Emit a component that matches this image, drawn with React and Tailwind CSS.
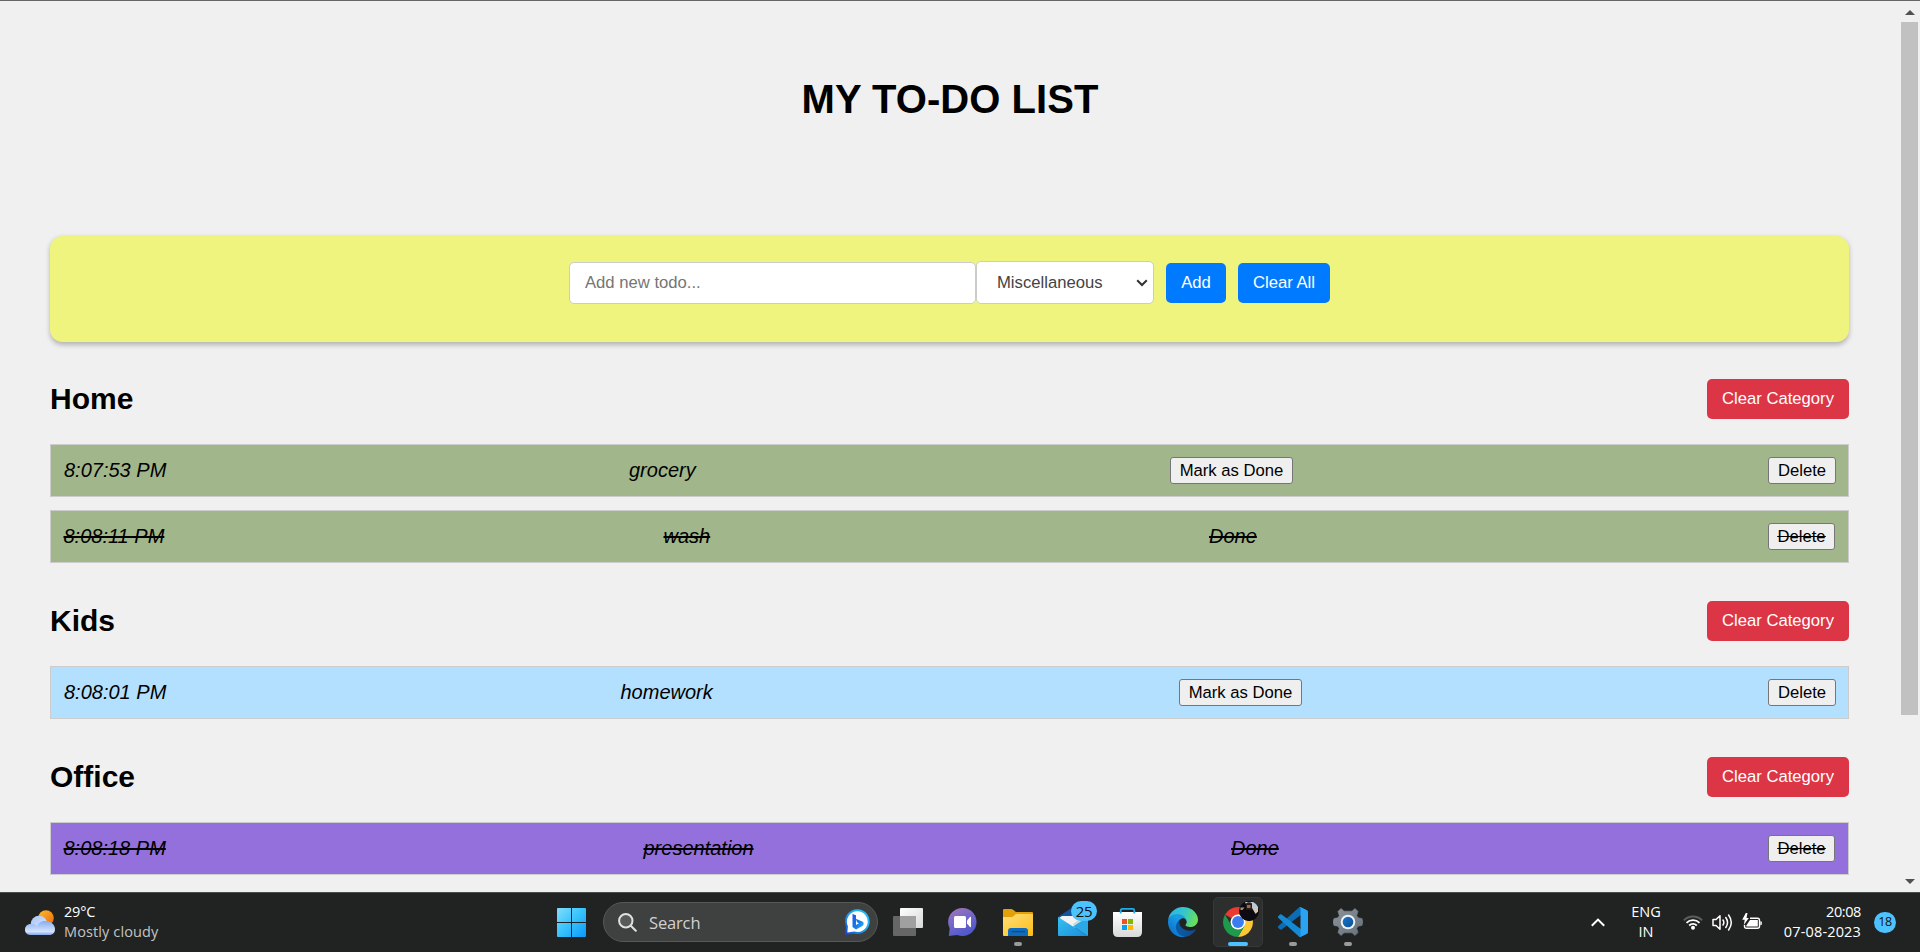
import React from "react";

const categories = [
  {
    name: "Home",
    color: "bg-[#a1b78b]",
    items: [
      { time: "8:07:53 PM", title: "grocery", done: false, timeCol: "w-[565px]", titleCol: "w-[541px]" },
      { time: "8:08:11 PM", title: "wash", done: true, timeCol: "w-[600px]", titleCol: "w-[545.5px]" },
    ],
  },
  {
    name: "Kids",
    color: "bg-[#b3e0ff]",
    items: [{ time: "8:08:01 PM", title: "homework", done: false, timeCol: "w-[556.5px]", titleCol: "w-[558.5px]" }],
  },
  {
    name: "Office",
    color: "bg-[#9370db]",
    items: [{ time: "8:08:18 PM", title: "presentation", done: true, timeCol: "w-[580px]", titleCol: "w-[587.5px]" }],
  },
];

function SmallButton({ children, done, width }) {
  return (
    <button
      className={`h-[27px] shrink-0 rounded-[3px] border border-[#767676] bg-[#efefef] text-center text-[16.67px] leading-[24px] not-italic text-black ${width} ${done ? "line-through" : ""}`}
    >
      {children}
    </button>
  );
}

function TodoRow({ item, color }) {
  return (
    <li
      className={`flex h-[53px] items-center border border-[#ccc] text-[20px] italic text-black ${color} ${item.done ? "pr-[13px] pl-[12.5px] line-through" : "pr-[12px] pl-[13px]"}`}
    >
      <span className={`shrink-0 pb-[2px] ${item.timeCol}`}>{item.time}</span>
      <span className={`shrink-0 pb-[2px] ${item.titleCol}`}>{item.title}</span>
      {item.done ? <span className="pb-[2px]">Done</span> : <SmallButton width="w-[123px]">Mark as Done</SmallButton>}
      <span className="ml-auto flex">
        <SmallButton done={item.done} width={item.done ? "w-[67px]" : "w-[68px]"}>
          Delete
        </SmallButton>
      </span>
    </li>
  );
}

function Category({ category }) {
  return (
    <section className="flex flex-col">
      <div className="flex h-[40px] items-center justify-between">
        <h2 className="pb-px text-[30px] leading-[33px] font-bold">{category.name}</h2>
        <button className="h-[40px] w-[142px] rounded-[5px] bg-[#dc3545] pb-[2px] text-[16.67px] text-white">Clear Category</button>
      </div>
      <ul className="mt-[25px] flex flex-col gap-[13px]">
        {category.items.map((item) => (
          <TodoRow key={item.time} item={item} color={category.color} />
        ))}
      </ul>
    </section>
  );
}

function AddForm() {
  return (
    <div className="flex h-[106px] justify-center rounded-[12.5px] bg-[#eff47e] pt-[25px] shadow-[0_2.5px_5px_rgba(0,0,0,0.25)]">
      <input
        placeholder="Add new todo..."
        className="mt-px h-[42px] w-[407px] rounded-[5px] border border-[#ccc] bg-white px-[15px] text-[16.67px] placeholder:text-[#757575]"
      />
      <div className="relative h-[43px] w-[178px]">
        <select className="h-[43px] w-[178px] appearance-none rounded-[5px] border border-[#ccc] bg-white pl-[20px] text-[16.67px] text-[#444]">
          <option>Miscellaneous</option>
        </select>
        <svg className="absolute top-[18px] right-[6px]" width="12" height="8" viewBox="0 0 12 8" fill="none" stroke="#333" strokeWidth="2">
          <path d="M1.200 1.200 6 6l4.800-4.800" />
        </svg>
      </div>
      <button className="mt-[2px] ml-[12px] h-[40px] w-[60px] rounded-[5px] bg-[#007bff] pb-[2px] text-[16.67px] text-white">Add</button>
      <button className="mt-[2px] ml-[12px] h-[40px] w-[92px] rounded-[5px] bg-[#007bff] pb-[2px] text-[16.67px] text-white">Clear All</button>
    </div>
  );
}

function Scrollbar() {
  return (
    <div className="flex w-[21px] shrink-0 flex-col items-center">
      <svg className="mt-[9px]" width="10" height="5" viewBox="0 0 10 5">
        <path d="M0 5 5 0l5 5z" fill="#505050" />
      </svg>
      <div className="mt-[7px] h-[693px] w-[17px] bg-[#c1c1c1]" />
      <svg className="mt-auto mb-[8px]" width="10" height="5" viewBox="0 0 10 5">
        <path d="M0 0 5 5l5-5z" fill="#505050" />
      </svg>
    </div>
  );
}

function WeatherIcon() {
  return (
    <svg width="30" height="25" viewBox="0 0 30 25">
      <defs>
        <linearGradient id="sun" x1="0" y1="0" x2="1" y2="1">
          <stop offset="0" stopColor="#fcc02a" />
          <stop offset="1" stopColor="#f0640c" />
        </linearGradient>
        <linearGradient id="cloudBack" x1="0" y1="0" x2="1" y2="1">
          <stop offset="0" stopColor="#a9c6f8" />
          <stop offset="1" stopColor="#dce8fc" />
        </linearGradient>
        <linearGradient id="cloudFront" x1="0" y1="0" x2="0" y2="1">
          <stop offset="0" stopColor="#86acf0" />
          <stop offset="0.75" stopColor="#d5e3fb" />
          <stop offset="1" stopColor="#7fa5ea" />
        </linearGradient>
      </defs>
      <circle cx="21" cy="8" r="7.8" fill="url(#sun)" />
      <circle cx="14" cy="14" r="8.3" fill="url(#cloudBack)" />
      <path d="M5 25a5 5 0 0 1-5-5.500c0-3.500 3-6 6.300-5.500C8.500 13.800 11 15 12 17c1-4 4.500-6.500 9-6 5 .2 8.800 3.500 9 8 0 3.500-2 6-5.500 6z" fill="url(#cloudFront)" />
    </svg>
  );
}

function StartIcon() {
  return (
    <svg className="mt-px" width="29" height="29" viewBox="0 0 29 29">
      <defs>
        <linearGradient id="win" x1="0" y1="0" x2="29" y2="29" gradientUnits="userSpaceOnUse">
          <stop offset="0" stopColor="#83dcfc" />
          <stop offset="0.45" stopColor="#3cc6fb" />
          <stop offset="1" stopColor="#0a98fb" />
        </linearGradient>
      </defs>
      <path d="M1 0h13v14H0V1q0-1 1-1zM15 0h13q1 0 1 1v13H15zM0 15h14v14H1q-1 0-1-1zM15 15h14v13q0 1-1 1H15z" fill="url(#win)" />
    </svg>
  );
}

function BingIcon() {
  return (
    <svg width="25" height="26" viewBox="0 0 25 26">
      <defs>
        <linearGradient id="bingRing" x1="1" y1="0" x2="0" y2="1">
          <stop offset="0" stopColor="#2cc0f5" />
          <stop offset="0.5" stopColor="#18a6f0" />
          <stop offset="1" stopColor="#1b48d0" />
        </linearGradient>
        <linearGradient id="bingB" x1="0" y1="0" x2="1" y2="1">
          <stop offset="0" stopColor="#1a55e3" />
          <stop offset="0.6" stopColor="#1780ea" />
          <stop offset="1" stopColor="#33c8ee" />
        </linearGradient>
      </defs>
      <path d="M12.500 1.200a11.400 11.400 0 1 1-3.500 22.300L1.200 24.800l.7-7.500A11.400 11.400 0 0 1 12.500 1.200z" fill="#fff" stroke="url(#bingRing)" strokeWidth="2" />
      <path d="M7.500 5 11 6.300V16l3-1.800-2-1-1.200-3.500 7 3c1.200.6 1.200 3 0 4L11 20.500 7.500 18z" fill="url(#bingB)" />
    </svg>
  );
}

function TaskViewIcon() {
  return (
    <svg width="30" height="28" viewBox="0 0 30 28">
      <defs>
        <linearGradient id="tv" x1="0" y1="0" x2="1" y2="1">
          <stop offset="0" stopColor="#fff" />
          <stop offset="1" stopColor="#d8d8d8" />
        </linearGradient>
      </defs>
      <rect x="7" y="0" width="23" height="20" rx="1" fill="url(#tv)" />
      <rect x="0" y="8" width="23" height="20" rx="1" fill="#666" />
      <rect x="7" y="8" width="16" height="12" fill="#a0a0a0" />
    </svg>
  );
}

function ChatIcon() {
  return (
    <svg width="29" height="28" viewBox="0 0 29 28">
      <defs>
        <linearGradient id="chat" x1="0" y1="0" x2="0.500" y2="1">
          <stop offset="0" stopColor="#a477b4" />
          <stop offset="0.5" stopColor="#7768c9" />
          <stop offset="1" stopColor="#5059c9" />
        </linearGradient>
      </defs>
      <path d="M14.500 0a14 14 0 1 1-5.200 27L.8 28l.9-7.500A14 14 0 0 1 14.500 0z" fill="url(#chat)" />
      <rect x="6" y="8" width="12" height="12" rx="1.500" fill="#fff" />
      <path d="M19 12.500 22 9q1-.6 1 .5v9q0 1-1 .5l-3-3.500z" fill="#fff" />
    </svg>
  );
}

function FolderIcon() {
  return (
    <svg className="mt-px" width="30" height="27" viewBox="0 0 30 27">
      <defs>
        <linearGradient id="folder" x1="0" y1="0" x2="1" y2="1">
          <stop offset="0" stopColor="#ffe07a" />
          <stop offset="1" stopColor="#fcbc18" />
        </linearGradient>
      </defs>
      <path d="M0 1q0-1 1-1h7.500l1.600.7L13 3h16q1 0 1 1v8H0z" fill="#e3a008" />
      <path d="M0 8h9.500L13 5h16q1 0 1 1v20q0 1-1 1H1q-1 0-1-1z" fill="url(#folder)" />
      <path d="M5 27v-5q0-3 3-3h14q3 0 3 3v5z" fill="#0f6cbd" />
      <path d="M9 22.700h12.500" stroke="#0b4a8c" strokeWidth="1.300" strokeLinecap="round" />
    </svg>
  );
}

function MailIcon() {
  return (
    <svg className="-mt-px" width="30" height="29" viewBox="0 0 30 29">
      <defs>
        <linearGradient id="mail" x1="0" y1="0" x2="1" y2="1">
          <stop offset="0" stopColor="#35c1f1" />
          <stop offset="1" stopColor="#1a8ddb" />
        </linearGradient>
      </defs>
      <path d="M0 10 15 0l15 10v8H0z" fill="#1256a3" />
      <path d="M4 9h22v6L15 22 1 11z" fill="#f2f2f2" />
      <path d="M15 17 26 9v6l-9 6z" fill="#cfd6dc" />
      <path d="M0 10 30 29H1q-1 0-1-1z" fill="url(#mail)" />
      <path d="M30 10v19L15 19.600z" fill="#2ba9e6" />
    </svg>
  );
}

function StoreIcon() {
  return (
    <svg className="mt-px" width="29" height="29" viewBox="0 1 29 29">
      <defs>
        <linearGradient id="store" x1="0" y1="0" x2="0" y2="1">
          <stop offset="0" stopColor="#fff" />
          <stop offset="1" stopColor="#d9d9d9" />
        </linearGradient>
      </defs>
      <path d="M0 5h29v20q0 5-5 5H5q-5 0-5-5z" fill="url(#store)" />
      <path d="M7.700 6.500V3.400q0-1.500 1.500-1.500h10.600q1.500 0 1.500 1.500v3.100" fill="none" stroke="#25a9e8" strokeWidth="1.800" />
      <path d="M9 12h5v5H9z" fill="#f25022" />
      <path d="M15 12h5v5h-5z" fill="#7fba00" />
      <path d="M9 18h5v5H9z" fill="#00a4ef" />
      <path d="M15 18h5v5h-5z" fill="#ffb900" />
    </svg>
  );
}

function EdgeIcon() {
  return (
    <svg width="30" height="30" viewBox="0 0 256 256">
      <defs>
        <linearGradient id="edgeA" x1="0.250" y1="0.500" x2="0.950" y2="0.500">
          <stop offset="0" stopColor="#0c59a4" />
          <stop offset="1" stopColor="#114a8b" />
        </linearGradient>
        <linearGradient id="edgeB" x1="0.600" y1="0.300" x2="0.100" y2="1">
          <stop offset="0" stopColor="#1b9de2" />
          <stop offset="0.5" stopColor="#0f82d8" />
          <stop offset="1" stopColor="#0b6fc9" />
        </linearGradient>
        <linearGradient id="edgeC" x1="0" y1="0.300" x2="1" y2="0.600">
          <stop offset="0" stopColor="#2ab4ea" />
          <stop offset="0.5" stopColor="#36c7c8" />
          <stop offset="1" stopColor="#6ee052" />
        </linearGradient>
      </defs>
      <path d="M231 190.500c-3.400 1.800-6.900 3.400-10.500 4.700a101.900 101.900 0 0 1-35.900 6.500c-47.300 0-88.500-32.500-88.500-74.300.1-11.400 6.400-21.900 16.400-27.300-42.800 1.800-53.800 46.400-53.800 72.500 0 73.900 68.100 81.400 82.800 81.400 7.900 0 19.800-2.300 27-4.600l1.300-.4a128.300 128.300 0 0 0 66.600-52.800c2.500-4-1.500-7.500-5.400-5.700z" fill="url(#edgeA)" />
      <path d="M105.700 241.400a79.200 79.200 0 0 1-22.700-21.300 80.700 80.700 0 0 1 29.500-120c3.200-1.500 8.500-4.100 15.600-4 10.100.1 19.600 4.900 25.700 13 4 5.400 6.300 11.900 6.400 18.700 0-.2 24.500-79.600-80-79.600-43.900 0-80 41.700-80 78.200-.2 19.300 4 38.500 12.100 56 27.600 58.800 94.800 87.600 156.400 67.100-21.100 6.600-44.100 3.700-63-8.100z" fill="url(#edgeB)" />
      <path d="M152.300 148.900c-.9 1-3.400 2.500-3.400 5.600 0 2.600 1.700 5.200 4.800 7.300 14.300 10 41.400 8.600 41.500 8.600 10.700 0 21.100-2.900 30.300-8.300A61.400 61.400 0 0 0 255.900 109.300c.3-22.400-8-37.300-11.300-43.900C223.500 23.900 177.700 0 128 0A128 128 0 0 0 0 126.200c.5-36.500 36.800-66 80-66 3.500 0 23.500.3 42 10.100 16.300 8.600 24.900 18.900 30.800 29.200 6.200 10.700 7.300 24.100 7.300 29.500 0 5.300-2.700 13.300-7.800 19.900z" fill="url(#edgeC)" />
    </svg>
  );
}

function ChromeIcon() {
  return (
    <svg width="30" height="30" viewBox="0 0 48 48">
      <path d="M24 24 3.220 12A24 24 0 0 1 44.780 12z" fill="#ea3b30" />
      <path d="M24 24 24 12H44.780A24 24 0 0 1 24 48L34.400 30z" fill="#fcc934" />
      <path d="M24 24 13.600 30 3.220 12A24 24 0 0 0 24 48L34.400 30z" fill="#1e9a4c" />
      <circle cx="24" cy="24" r="12" fill="#fff" />
      <circle cx="24" cy="24" r="9.500" fill="#3b7cf0" />
    </svg>
  );
}

function Avatar() {
  return (
    <svg className="absolute top-[8px] right-[6px]" width="20" height="20" viewBox="0 0 20 20">
      <defs>
        <clipPath id="face">
          <circle cx="10" cy="10" r="10" />
        </clipPath>
      </defs>
      <g clipPath="url(#face)">
        <rect width="20" height="20" fill="#0e0c10" />
        <path d="M6 1h11l2 4v5l-3 2-3-5V3H7z" fill="#b9ccd6" />
        <path d="M14.500 6.500H19v4l-2.500 2.500z" fill="#d8c7b2" />
        <path d="M1.500 6.500h4l-2 2.500h-2z" fill="#a98f78" />
        <path d="M7 2.500q3-2.500 6 0V9H7z" fill="#2a1c18" />
        <path d="M8 4h3.500v3H8z" fill="#a06a4c" />
        <path d="M3 20q0-10 6-11.500 7 0 8 11.500z" fill="#0d0b10" />
      </g>
    </svg>
  );
}

function CodeIcon() {
  return (
    <svg width="30" height="30" viewBox="0 0 100 100">
      <path d="M96.500 10.800 75.900.9a6.200 6.200 0 0 0-7.100 1.200L1.300 63.600a4.200 4.200 0 0 0 0 6.200l5.500 5c1.500 1.300 3.700 1.400 5.300.2L93.400 13.400c2.700-2 6.600-.1 6.600 3.300v-.2a6.200 6.200 0 0 0-3.500-5.700z" fill="#0a6db5" />
      <path d="M96.500 89.200 75.900 99.100a6.200 6.200 0 0 1-7.100-1.200L1.300 36.400a4.200 4.200 0 0 1 0-6.200l5.500-5a4.200 4.200 0 0 1 5.300-.2l81.300 61.600c2.700 2 6.600.1 6.600-3.300v.2a6.200 6.200 0 0 1-3.500 5.700z" fill="#1489d4" />
      <path d="M75.900 99.100a6.200 6.200 0 0 1-7.100-1.200c2.300 2.300 6.200.7 6.200-2.600V4.700c0-3.300-3.900-4.900-6.200-2.600A6.200 6.200 0 0 1 75.900.9l20.600 9.900a6.200 6.200 0 0 1 3.500 5.700v67c0 2.400-1.400 4.600-3.500 5.700z" fill="#2aa4f2" />
    </svg>
  );
}

function SettingsIcon() {
  return (
    <svg width="30" height="30" viewBox="0 0 30 30">
      <defs>
        <linearGradient id="gear" x1="0" y1="0" x2="30" y2="30" gradientUnits="userSpaceOnUse">
          <stop offset="0" stopColor="#8d959b" />
          <stop offset="1" stopColor="#65707a" />
        </linearGradient>
        <linearGradient id="gearDot" x1="0" y1="0" x2="1" y2="1">
          <stop offset="0" stopColor="#1a75c8" />
          <stop offset="1" stopColor="#0a4f96" />
        </linearGradient>
      </defs>
      <path
        d="M0 15 1 11.500 5 10.800 6.300 8.500 5 4.500 8 1.500 11 4.200H19L22 1.500 25 4.500 23.700 8.500 25 10.800 29 11.500 30 15 29 18.500 25 19.200 23.700 21.500 25 25.500 22 28.500 19 25.800H11L8 28.500 5 25.500 6.300 21.500 5 19.200 1 18.500z"
        fill="url(#gear)"
        stroke="url(#gear)"
        strokeWidth="0.600"
        strokeLinejoin="round"
      />
      <circle cx="15" cy="15" r="7.300" fill="#eef1f4" />
      <circle cx="15" cy="15" r="5.300" fill="url(#gearDot)" />
    </svg>
  );
}

function TaskbarApp({ children, running }) {
  return (
    <div className="relative flex h-[58px] w-[55px] items-center pl-[13px]">
      {children}
      {running && <span className="absolute bottom-[5px] left-[24px] h-[4px] w-[8px] rounded-full bg-[#9a9a9a]" />}
    </div>
  );
}

function Taskbar() {
  return (
    <footer className="flex h-[60px] shrink-0 items-center border-t border-[#4a4b4b] bg-[#212322] pb-px font-['Open_Sans','Noto_Sans',sans-serif] text-[14.500px] leading-[20px] text-white">
      <div className="flex w-[557px] items-center pl-[25px]">
        <WeatherIcon />
        <div className="ml-[9px] flex flex-col pb-px">
          <span className="tracking-[-0.200px]">29°C</span>
          <span className="tracking-[0.120px] text-[#c4c5c5]">Mostly cloudy</span>
        </div>
      </div>
      <StartIcon />
      <div className="ml-[17px] flex h-[40px] w-[275px] items-center rounded-full border border-[#565757] bg-[#3f4040] pr-[7px] pl-[14px]">
        <svg width="19" height="19" viewBox="0 0 19 19" fill="none" stroke="#e0e0e0" strokeWidth="2" strokeLinecap="round">
          <circle cx="7.800" cy="7.800" r="6.700" fill="#585959" />
          <path d="m12.800 12.800 5 5" />
        </svg>
        <span className="ml-[12px] pt-px text-[16.500px] tracking-[-0.150px] text-[#d2d2d2]">Search</span>
        <span className="ml-auto">
          <BingIcon />
        </span>
      </div>
      <div className="ml-[2px] flex">
        <TaskbarApp><TaskViewIcon /></TaskbarApp>
        <TaskbarApp><ChatIcon /></TaskbarApp>
        <TaskbarApp running><FolderIcon /></TaskbarApp>
        <TaskbarApp>
          <MailIcon />
          <span className="absolute top-[8px] left-[26px] flex h-[20px] w-[26px] items-center justify-center rounded-full bg-[#4cc2ff] text-[15px] tracking-[-0.300px] text-[#111]">25</span>
        </TaskbarApp>
        <TaskbarApp><StoreIcon /></TaskbarApp>
        <TaskbarApp><EdgeIcon /></TaskbarApp>
        <div className="relative flex h-[58px] w-[55px] items-center pl-[3px]">
          <div className="flex h-[50px] w-[50px] items-center justify-center rounded-[5px] border border-[#373838] bg-[#2d2e2e]">
            <ChromeIcon />
          </div>
          <Avatar />
          <span className="absolute bottom-[5px] left-[18px] h-[4px] w-[20px] rounded-full bg-[#4cc2ff]" />
        </div>
        <TaskbarApp running><CodeIcon /></TaskbarApp>
        <TaskbarApp running><SettingsIcon /></TaskbarApp>
      </div>
      <div className="ml-auto flex items-center pr-[24px]">
        <svg width="14" height="9" viewBox="0 0 14 9" fill="none" stroke="#fff" strokeWidth="2">
          <path d="M.8 7.800 7 1.600l6.200 6.200" />
        </svg>
        <div className="ml-[26px] w-[30px] pb-px text-center text-[14.500px]">
          <div>ENG</div>
          <div>IN</div>
        </div>
        <svg className="ml-[22px]" width="20" height="16" viewBox="0 0 20 16" fill="none" strokeWidth="1.800">
          <path d="M.8 6.300a13 13 0 0 1 18.400 0" stroke="#5c5d5d" />
          <path d="M3.500 8.900a9.200 9.200 0 0 1 13 0M6.200 11.500a5.400 5.400 0 0 1 7.600 0" stroke="#fff" />
          <circle cx="10" cy="13.700" r="2" fill="#fff" />
        </svg>
        <svg className="ml-[9px]" width="21" height="19" viewBox="0 0 21 19" fill="none" stroke="#fff" strokeWidth="1.500" strokeLinecap="round" strokeLinejoin="round">
          <path d="M1 6.500h3L8 2.700v13.600L4 12.500H1z" />
          <path d="M11 7q1.700 2.500 0 5M13.800 4.500q3.500 5 0 10M16.600 2q5.400 7.500 0 15" />
        </svg>
        <svg className="mb-[2px] ml-[9px]" width="21" height="17" viewBox="0 0 21 17">
          <path d="M8 5.200h7.500q2 0 2 2v6q0 2-2 2h-11q-2 0-2-2V12" fill="none" stroke="#fff" strokeWidth="1.400" />
          <path d="M8 7h7.800v6.500H4.300V12.500z" fill="#fff" />
          <path d="M18.300 8.200q1.500 0 1.500 1v2q0 1-1.500 1z" fill="#fff" />
          <path d="M3.800 0 .2 6.800h2.500L1.800 12 6.800 5H4.500L5.500 0z" fill="#fff" />
        </svg>
        <div className="ml-[20px] flex w-[78px] flex-col items-end pb-px text-[14.500px]">
          <div className="tracking-[-0.400px]">20:08</div>
          <div className="tracking-[0.150px]">07-08-2023</div>
        </div>
        <span className="ml-[13px] flex h-[21px] w-[22px] items-center justify-center rounded-full bg-[#4cc2ff] pb-px text-[12.500px] tracking-[-0.300px] text-[#111]">18</span>
      </div>
    </footer>
  );
}

export default function App() {
  return (
    <div className="flex h-[952px] w-[1920px] flex-col overflow-hidden bg-[#f0f0f0] font-['Liberation_Sans',Arial,sans-serif] text-black">
      <div className="flex h-[892px] shrink-0 border-t border-[#666]">
        <main className="flex grow flex-col pr-[50px] pl-[50px]">
          <h1 className="mt-[75px] mb-[114px] pl-px text-center text-[40px] leading-[46px] font-bold tracking-[0.040px]">MY TO-DO LIST</h1>
          <AddForm />
          <div className="mt-[37px] flex flex-col gap-[38px]">
            {categories.map((category) => (
              <Category key={category.name} category={category} />
            ))}
          </div>
        </main>
        <Scrollbar />
      </div>
      <Taskbar />
    </div>
  );
}
